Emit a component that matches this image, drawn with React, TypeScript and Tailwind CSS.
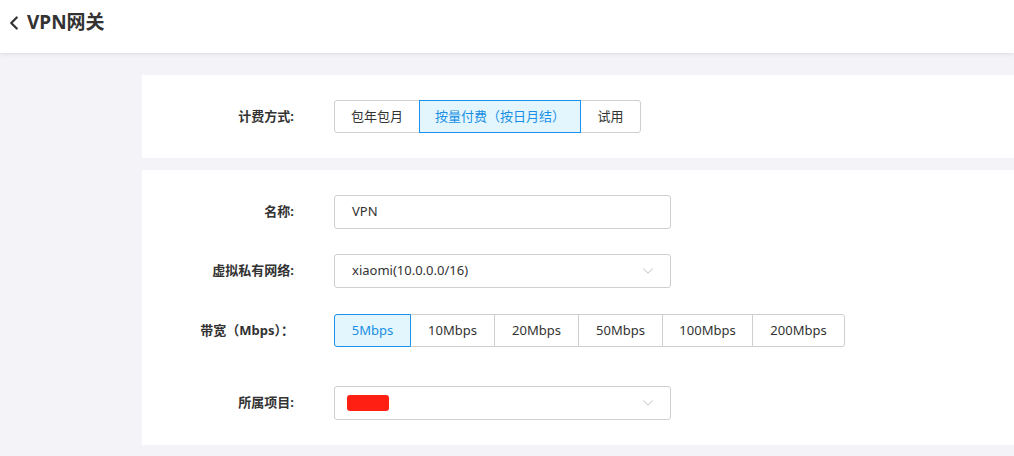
import { ChevronDown, ChevronLeft } from 'lucide-react'

const font = { fontFamily: '"Noto Sans", "Noto Sans CJK SC", sans-serif' }

const billing = [
  { label: '包年包月', w: 'w-[86px]' },
  { label: '按量付费（按日月结）', w: 'w-[162px]', active: true },
  { label: '试用', w: 'w-[61px]' },
]

const bandwidths = [
  { label: '5Mbps', w: 'w-[77px]', active: true },
  { label: '10Mbps', w: 'w-[85px]' },
  { label: '20Mbps', w: 'w-[85px]' },
  { label: '50Mbps', w: 'w-[85px]' },
  { label: '100Mbps', w: 'w-[91px]' },
  { label: '200Mbps', w: 'w-[93px]' },
]

function Segmented({ items }: { items: { label: string; w: string; active?: boolean }[] }) {
  return (
    <div className="flex h-[33px]">
      {items.map((it, i) => (
        <div
          key={it.label}
          className={`${it.w} flex items-center justify-center text-[13px] border ${
            i > 0 ? '-ml-px' : ''
          } ${i === 0 ? 'rounded-l-[3px]' : ''} ${i === items.length - 1 ? 'rounded-r-[3px]' : ''} ${
            it.active
              ? 'relative z-10 border-[#1a90ea] bg-[#e3f6fd] text-[#1a8fe3]'
              : 'border-[#cfcfcf] bg-white text-[#333]'
          }`}
        >
          {it.label}
        </div>
      ))}
    </div>
  )
}

function Row({ label, children }: { label: string; children: React.ReactNode }) {
  return (
    <div className="flex items-center">
      <div className="w-[152px] text-right text-[13px] font-bold text-[#333]">{label}</div>
      <div className="ml-[40px]">{children}</div>
    </div>
  )
}

function Field({ children, select }: { children?: React.ReactNode; select?: boolean }) {
  return (
    <div className="w-[337px] h-[34px] border border-[#cfcfcf] rounded-[3px] bg-white flex items-center pl-[17px] pr-[13px] text-[13px] text-[#333]">
      <div className="flex-1">{children}</div>
      {select && <ChevronDown size={18} strokeWidth={1} className="text-[#aaa]" />}
    </div>
  )
}

export default function App() {
  return (
    <div className="w-[1014px] h-[456px] bg-[#f4f4f8] overflow-hidden" style={font}>
      {/* Header */}
      <header className="h-[53px] bg-white shadow-[0_1px_4px_rgba(0,0,0,0.1)] flex items-center pl-[3px] relative z-10">
        <ChevronLeft size={22} strokeWidth={2.5} className="text-[#333] -mt-[7px]" />
        <h1 className="ml-[2px] text-[19px] font-bold text-[#333] -mt-[8px]">VPN网关</h1>
      </header>

      <div className="ml-[142px] pt-[22px] flex flex-col gap-[12px]">
        <section className="bg-white py-[25px]">
          <Row label="计费方式:">
            <Segmented items={billing} />
          </Row>
        </section>

        <section className="bg-white pt-[25px] pb-[25px] flex flex-col">
          <Row label="名称:">
            <Field>VPN</Field>
          </Row>
          <div className="mt-[25px]">
            <Row label="虚拟私有网络:">
              <Field select>xiaomi(10.0.0.0/16)</Field>
            </Row>
          </div>
          <div className="mt-[26px]">
            <Row label="带宽（Mbps）：">
              <Segmented items={bandwidths} />
            </Row>
          </div>
          <div className="mt-[39px]">
            <Row label="所属项目:">
              <Field select>
                <div className="w-[42px] h-[16px] bg-[#ff1f13] rounded-[3px] -ml-[5px]" />
              </Field>
            </Row>
          </div>
        </section>
      </div>
    </div>
  )
}
